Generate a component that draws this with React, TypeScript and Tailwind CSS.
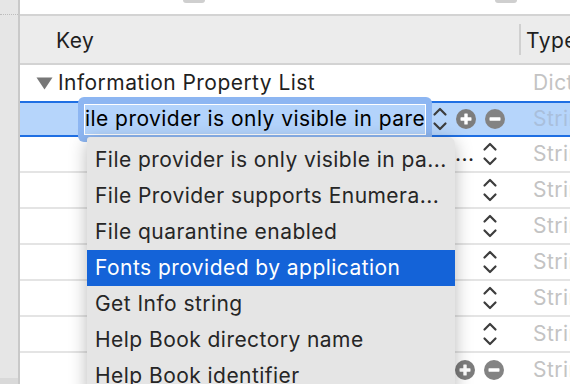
import React from "react";

const font = { fontFamily: "Inter, 'Liberation Sans', sans-serif", letterSpacing: "0.45px" };

function Stepper() {
  return (
    <svg width="16" height="26" viewBox="0 0 16 26" className="shrink-0">
      <path d="M2.5 8.5 L8 3 L13.5 8.5" fill="none" stroke="#3d3d3d" strokeWidth="2.2" strokeLinecap="round" strokeLinejoin="round" />
      <path d="M2.5 17.5 L8 23 L13.5 17.5" fill="none" stroke="#3d3d3d" strokeWidth="2.2" strokeLinecap="round" strokeLinejoin="round" />
    </svg>
  );
}

function PlusMinus() {
  return (
    <div className="flex items-center gap-[9px] shrink-0">
      <svg width="20" height="20" viewBox="0 0 20 20">
        <circle cx="10" cy="10" r="10" fill="#7d7d7d" />
        <rect x="4.5" y="8.3" width="11" height="3.4" rx="0.6" fill="#fff" />
        <rect x="8.3" y="4.5" width="3.4" height="11" rx="0.6" fill="#fff" />
      </svg>
      <svg width="20" height="20" viewBox="0 0 20 20">
        <circle cx="10" cy="10" r="10" fill="#838383" />
        <rect x="4.5" y="8.3" width="11" height="3.4" rx="0.6" fill="#fff" />
      </svg>
    </div>
  );
}

type Row = { key: string; type: string; mode: "plain" | "hover"; cut?: boolean };

const rows: Row[] = [
  { key: "File provider is only visible in parent bundle and its plugins", type: "String", mode: "plain", cut: true },
  { key: "Bundle name", type: "String", mode: "plain" },
  { key: "Bundle version", type: "String", mode: "plain" },
  { key: "Bundle identifier", type: "String", mode: "plain" },
  { key: "Executable file", type: "String", mode: "plain" },
  { key: "Bundle OS Type code", type: "String", mode: "plain" },
  { key: "Localization native", type: "String", mode: "hover" },
];

const menu = [
  "File provider is only visible in pa...",
  "File Provider supports Enumera...",
  "File quarantine enabled",
  "Fonts provided by application",
  "Get Info string",
  "Help Book directory name",
  "Help Book identifier",
];

export default function App() {
  return (
    <div className="relative flex w-[570px] h-[384px] overflow-hidden bg-white text-[21px] text-[#1f1f1f]" style={font}>
      {/* left gutter */}
      <div className="flex flex-col w-[20px] shrink-0 bg-[#e6e6e6] border-r-2 border-[#c9c9c9]">
        <div className="h-[15px] border-b border-dotted border-[#bdbdbd]" />
        <div className="flex-1" />
        <div className="h-[6px] bg-[#d9d9d9]" />
      </div>

      <div className="flex flex-col flex-1 min-w-0 overflow-hidden">
        {/* top strip */}
        <div className="flex h-[14px] shrink-0">
          <div className="w-[163px] shrink-0" />
          <div className="w-[22px] h-[3px] shrink-0 bg-[#cfcfcf] rounded-b-sm" />
          <div className="w-[290px] shrink-0" />
          <div className="w-[22px] h-[3px] shrink-0 bg-[#cfcfcf] rounded-b-sm" />
        </div>

        {/* header */}
        <div className="flex items-center h-[51px] shrink-0 bg-[#ececec] border-y-2 border-[#d3d3d3]">
          <div className="w-[499px] shrink-0 pl-[36px] pt-[2px]">Key</div>
          <div className="h-[31px] w-[2px] shrink-0 bg-[#d0d0d0]" />
          <div className="pl-[5px] pt-[2px] whitespace-nowrap">Type</div>
        </div>

        {/* root row */}
        <div className="flex items-center h-[36px] shrink-0">
          <div className="flex items-center w-[501px] shrink-0 pl-[16px] gap-[5px]">
            <svg width="17" height="13" viewBox="0 0 17 13" className="shrink-0">
              <path d="M0.5 0.5 L16.5 0.5 L8.5 12.5 Z" fill="#777" />
            </svg>
            <span className="whitespace-nowrap">Information Property List</span>
          </div>
          <div className="pl-[12px] text-[#c3c3c3] whitespace-nowrap">Dictionary</div>
        </div>

        {/* selected row with editor */}
        <div className="flex items-center h-[36px] shrink-0 bg-[#b6d5fb] border-y-2 border-[#1f6fe3]">
          <div className="flex items-center w-[501px] shrink-0 pl-[58px]">
            <div className="flex items-center w-[354px] h-[45px] -my-[6px] rounded-[6px] bg-[#8db6f2] px-[6px] shrink-0">
              <div className="h-[31px] flex-1 min-w-0 overflow-hidden bg-[#b3d3fb] border border-white flex items-center">
                <span className="whitespace-nowrap text-black">ile provider is only visible in parent bundle</span>
              </div>
            </div>
            <Stepper />
            <div className="ml-[8px]">
              <PlusMinus />
            </div>
          </div>
          <div className="pl-[12px] text-[#a9bfdc] whitespace-nowrap">String</div>
        </div>

        {rows.map((r, i) => (
          <div key={i} className="flex items-center h-[36px] shrink-0 border-b-2 border-[#e4e4e4]">
            <div
              className={
                r.mode === "plain"
                  ? "flex items-center w-[501px] shrink-0 pl-[70px] pr-[23px]"
                  : "flex items-center w-[501px] shrink-0 pl-[70px] pr-[17px]"
              }
            >
              <span className="flex-1 min-w-0 overflow-hidden whitespace-nowrap">{r.key}</span>
              {r.cut && <span className="shrink-0 w-[14px] text-[#262626] tracking-[0.5px]">...</span>}
              {r.mode === "plain" ? (
                <div className="ml-[13px] shrink-0">
                  <Stepper />
                </div>
              ) : (
                <div className="flex items-center ml-[13px] shrink-0">
                  <Stepper />
                  <div className="ml-[8px]">
                    <PlusMinus />
                  </div>
                </div>
              )}
            </div>
            <div className="pl-[12px] text-[#c3c3c3] whitespace-nowrap">{r.type}</div>
          </div>
        ))}
      </div>

      {/* completion popup */}
      <div className="absolute left-[87px] top-[137px] w-[368px] h-[260px] bg-[#e5e5e5] rounded-tr-[7px] rounded-tl-[3px] pt-[5px] shadow-[0_4px_18px_rgba(0,0,0,0.28)]">
        {menu.map((m, i) => (
          <div
            key={i}
            className={
              i === 3
                ? "flex items-center h-[36px] px-[8px] bg-[#1463d8] text-white whitespace-nowrap"
                : "flex items-center h-[36px] px-[8px] text-[#262626] whitespace-nowrap"
            }
          >
            {m}
          </div>
        ))}
      </div>
    </div>
  );
}
